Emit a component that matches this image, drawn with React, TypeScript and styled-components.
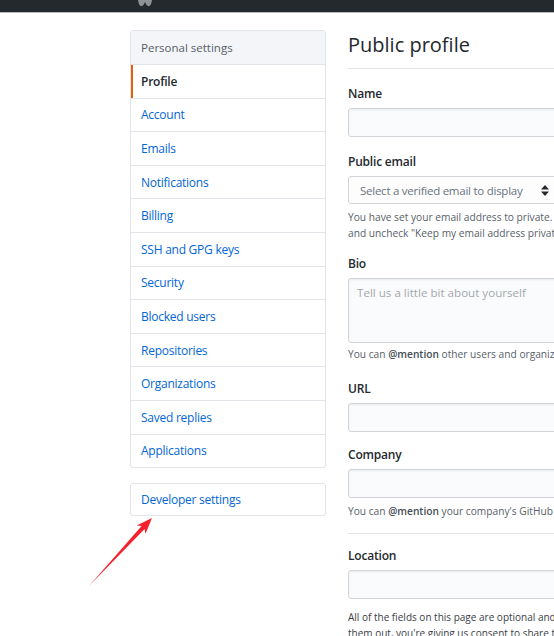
import React from "react";
import styled, { createGlobalStyle } from "styled-components";

const GlobalStyle = createGlobalStyle`
  html, body {
    margin: 0;
    padding: 0;
    background: #fff;
    overflow: hidden;
  }
  body {
    font-family: "Open Sans", "Noto Sans", sans-serif;
    color: #24292e;
  }
  * { box-sizing: border-box; }
`;

const TopBar = styled.header`
  height: 13px;
  background: #24292e;
  border-bottom: 1px solid #b9bbbd;
  display: flex;
  align-items: flex-start;
  padding-left: 137px;
`;

const Layout = styled.div`
  display: flex;
  align-items: flex-start;
  gap: 22px;
  padding: 17px 0 0 130px;
  width: 900px;
`;

const Sidebar = styled.nav`
  width: 196px;
  flex: none;
  display: flex;
  flex-direction: column;
  gap: 15px;
`;

const Menu = styled.div`
  border: 1px solid #e1e4e8;
  border-radius: 3px;
  overflow: hidden;
  background: #fff;
`;

const MenuHeading = styled.div`
  height: 33px;
  padding: 0 10px;
  display: flex;
  align-items: center;
  background: #f3f5f8;
  color: #586069;
  font-size: 11.5px;
`;

const MenuItem = styled.a<{ $selected?: boolean; $first?: boolean }>`
  height: ${(p) => (p.$first ? "31px" : "33.6px")};
  padding: 0 10px;
  display: flex;
  align-items: center;
  border-top: ${(p) => (p.$first ? "none" : "1px solid #e1e4e8")};
  font-size: 12px;
  letter-spacing: -0.25px;
  text-decoration: none;
  cursor: pointer;
  color: ${(p) => (p.$selected ? "#24292e" : "#0366d6")};
  font-weight: ${(p) => (p.$selected ? 600 : 400)};
  box-shadow: ${(p) => (p.$selected ? "inset 2px 0 0 #e36209" : "none")};
`;

const Main = styled.main`
  width: 440px;
  flex: none;
`;

const Title = styled.h2`
  margin: 0;
  padding: 2px 0 10px;
  font-size: 20px;
  line-height: 26px;
  font-weight: 400;
  border-bottom: 1px solid #e1e4e8;
`;

const FormGroup = styled.div<{ $top: number }>`
  margin-top: ${(p) => p.$top}px;
`;

const Label = styled.label`
  display: block;
  margin-bottom: 5px;
  font-size: 12px;
  letter-spacing: -0.2px;
  line-height: 18px;
  font-weight: 600;
  color: #24292e;
`;

const TextInput = styled.input`
  display: block;
  width: 100%;
  height: 29px;
  padding: 0 8px;
  border: 1px solid #d1d5da;
  border-radius: 3px;
  background: #fafbfc;
  box-shadow: inset 0 1px 2px rgba(27, 31, 35, 0.075);
  font: inherit;
  font-size: 12px;
`;

const SelectBox = styled.div`
  width: 100%;
  height: 28px;
  padding: 0 11px;
  display: flex;
  align-items: center;
  gap: 19px;
  border: 1px solid #d1d5da;
  border-radius: 3px;
  background: #fdfdfd;
  color: #6a737d;
  font-size: 11.5px;
  letter-spacing: -0.25px;
`;

const TextArea = styled.textarea`
  display: block;
  width: 100%;
  height: 65px;
  padding: 6px 8px;
  border: 1px solid #d1d5da;
  border-radius: 3px;
  background: #fafbfc;
  box-shadow: inset 0 1px 2px rgba(27, 31, 35, 0.075);
  font: inherit;
  font-size: 11.6px;
  resize: none;
  &::placeholder {
    color: #a3a8ad;
  }
`;

const Note = styled.p<{ $top: number }>`
  margin: ${(p) => p.$top}px 0 0;
  font-size: 10.2px;
  line-height: 16px;
  color: #586069;
  white-space: nowrap;
  strong {
    font-weight: 600;
    color: #444d56;
  }
`;

const Divider = styled.hr`
  margin: 14px 0 0;
  border: 0;
  border-top: 1px solid #e1e4e8;
`;

const Paragraph = styled.p`
  margin: 10px 0 0;
  font-size: 10px;
  line-height: 16px;
  color: #3a4047;
  white-space: nowrap;
`;

const Overlay = styled.svg`
  position: absolute;
  left: 0;
  top: 0;
  pointer-events: none;
`;

const LogoMark = () => (
  <svg width="16" height="8" viewBox="0 0 16 8">
    <path d="M1 0 Q2 7 5 6 Q7 5 8 2 Q9 5 11 6 Q14 7 15 0 Z" fill="#8e9296" />
  </svg>
);

const SortArrows = () => (
  <svg width="8" height="11" viewBox="0 0 8 11" style={{ flex: "none" }}>
    <path d="M4 0 L8 4.5 H0 Z M0 6.5 H8 L4 11 Z" fill="#24292e" />
  </svg>
);

const links = [
  "Account",
  "Emails",
  "Notifications",
  "Billing",
  "SSH and GPG keys",
  "Security",
  "Blocked users",
  "Repositories",
  "Organizations",
  "Saved replies",
  "Applications",
];

export default function App() {
  return (
    <>
      <GlobalStyle />
      <TopBar>
        <LogoMark />
      </TopBar>
      <Layout>
        <Sidebar>
          <Menu>
            <MenuHeading>Personal settings</MenuHeading>
            <MenuItem $selected>Profile</MenuItem>
            {links.map((l) => (
              <MenuItem key={l}>{l}</MenuItem>
            ))}
          </Menu>
          <Menu>
            <MenuItem $first>Developer settings</MenuItem>
          </Menu>
        </Sidebar>
        <Main>
          <Title>Public profile</Title>
          <FormGroup $top={16}>
            <Label>Name</Label>
            <TextInput />
          </FormGroup>
          <FormGroup $top={16}>
            <Label>Public email</Label>
            <SelectBox>
              <span>Select a verified email to display</span>
              <SortArrows />
            </SelectBox>
            <Note $top={5}>
              You have set your email address to private. To toggle email privacy, go to email settings
              <br />
              and uncheck "Keep my email address private."
            </Note>
          </FormGroup>
          <FormGroup $top={14}>
            <Label>Bio</Label>
            <TextArea placeholder="Tell us a little bit about yourself" />
            <Note $top={3}>
              You can <strong>@mention</strong> other users and organizations to link to them.
            </Note>
          </FormGroup>
          <FormGroup $top={18}>
            <Label>URL</Label>
            <TextInput />
          </FormGroup>
          <FormGroup $top={14}>
            <Label>Company</Label>
            <TextInput />
            <Note $top={5}>
              You can <strong>@mention</strong> your company's GitHub organization to link it.
            </Note>
          </FormGroup>
          <Divider />
          <FormGroup $top={13}>
            <Label>Location</Label>
            <TextInput />
          </FormGroup>
          <Paragraph>
            All of the fields on this page are optional and can be deleted at any time, and by filling
            <br />
            them out, you're giving us consent to share this data wherever your user profile appears.
          </Paragraph>
        </Main>
      </Layout>
      <Overlay width="554" height="636" viewBox="0 0 554 636">
        <polygon
          points="89,586 141.6,526.1 136.7,525.6 152,518 145.5,533.8 144.6,528.9"
          fill="#f5222d"
        />
      </Overlay>
    </>
  );
}
